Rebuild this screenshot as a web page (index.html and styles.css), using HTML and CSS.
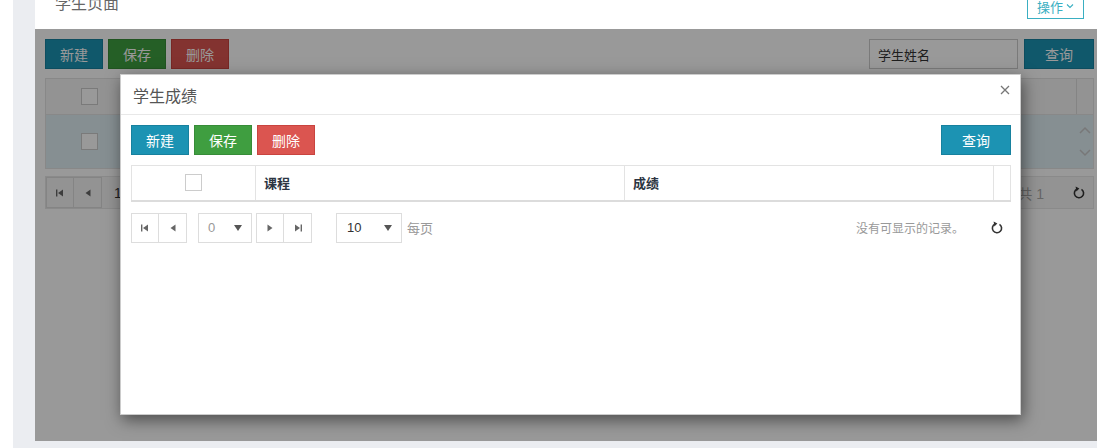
FILE: index.html
```html
<!DOCTYPE html>
<html lang="zh-CN">
<head>
    <meta charset="UTF-8">
    <meta name="viewport" content="width=device-width, initial-scale=1.0">
    <title>学生页面</title>
    <link rel="stylesheet" href="styles.css">
</head>
<body>
    <div class="layout">
        <aside class="sidebar"></aside>

        <main class="content">
            <section class="panel">
                <header class="panel-head">
                    <h2>学生页面</h2>
                    <button class="btn-outline">操作
                        <svg width="8" height="6" viewBox="0 0 8 6"><path d="M1 1.5 L4 4.5 L7 1.5" fill="none" stroke="#3aafc2" stroke-width="1.1"/></svg>
                    </button>
                </header>

                <div class="panel-body">
                    <div class="toolbar">
                        <button class="btn btn-info">新建</button>
                        <button class="btn btn-success">保存</button>
                        <button class="btn btn-danger">删除</button>
                        <input class="search" type="text" value="学生姓名">
                        <button class="btn btn-info btn-query">查询</button>
                    </div>

                    <!-- 学生列表 -->
                    <div class="grid">
                        <div class="grid-head">
                            <div class="cell-check"><span class="checkbox"></span></div>
                            <div class="cell-fill"></div>
                            <div class="cell-gutter"></div>
                        </div>
                        <div class="grid-row">
                            <div class="cell-check"><span class="checkbox"></span></div>
                            <div class="cell-fill"></div>
                            <div class="cell-arrows">
                                <svg width="12" height="8" viewBox="0 0 12 8"><path d="M1 7 L6 2 L11 7" fill="none" stroke="#c8c8c8" stroke-width="1.5"/></svg>
                                <svg width="12" height="8" viewBox="0 0 12 8"><path d="M1 1 L6 6 L11 1" fill="none" stroke="#c8c8c8" stroke-width="1.5"/></svg>
                            </div>
                        </div>
                    </div>

                    <div class="grid-pager">
                        <div class="pager-group">
                            <span class="pg-btn"><svg width="8" height="8" viewBox="0 0 8 8"><rect x="0" y="0.5" width="1.4" height="7" fill="#666"/><path d="M7 0.5 L2 4 L7 7.5Z" fill="#666"/></svg></span>
                            <span class="pg-btn"><svg width="6" height="8" viewBox="0 0 6 8"><path d="M5.5 0.5 L0.5 4 L5.5 7.5Z" fill="#666"/></svg></span>
                        </div>
                        <span class="pg-num">1</span>
                        <span class="pg-total">共 1</span>
                        <svg class="pg-refresh" width="12" height="13" viewBox="0 0 12 13"><path d="M4 3 A4.6 4.6 0 1 0 8.5 3.3" fill="none" stroke="#333" stroke-width="1.6"/><path d="M2.6 0.6 L6.4 2.6 L3.4 5.4Z" fill="#333"/></svg>
                    </div>

                    <div class="backdrop"></div>

                    <!-- 学生成绩弹窗 -->
                    <div class="modal">
                        <div class="modal-head">
                            <h3>学生成绩</h3>
                            <svg class="close" width="10" height="10" viewBox="0 0 10 10"><path d="M1 1 L9 9 M9 1 L1 9" stroke="#777" stroke-width="1.3"/></svg>
                        </div>
                        <div class="modal-body">
                            <div class="toolbar">
                                <button class="btn btn-info">新建</button>
                                <button class="btn btn-success">保存</button>
                                <button class="btn btn-danger">删除</button>
                                <button class="btn btn-info btn-query">查询</button>
                            </div>

                            <table class="score-table">
                                <thead>
                                    <tr>
                                        <th class="col-check"><span class="checkbox"></span></th>
                                        <th class="col-course">课程</th>
                                        <th class="col-score">成绩</th>
                                        <th class="col-gutter"></th>
                                    </tr>
                                </thead>
                            </table>

                            <div class="pager">
                                <div class="pager-group">
                                    <span class="pg-btn"><svg width="8" height="8" viewBox="0 0 8 8"><rect x="0" y="0.5" width="1.4" height="7" fill="#666"/><path d="M7 0.5 L2 4 L7 7.5Z" fill="#666"/></svg></span>
                                    <span class="pg-btn"><svg width="6" height="8" viewBox="0 0 6 8"><path d="M5.5 0.5 L0.5 4 L5.5 7.5Z" fill="#666"/></svg></span>
                                </div>
                                <span class="pg-select pg-page"><span class="muted">0</span><svg width="8" height="6" viewBox="0 0 8 6"><path d="M0 0 L8 0 L4 6Z" fill="#555"/></svg></span>
                                <div class="pager-group">
                                    <span class="pg-btn"><svg width="6" height="8" viewBox="0 0 6 8"><path d="M0.5 0.5 L5.5 4 L0.5 7.5Z" fill="#666"/></svg></span>
                                    <span class="pg-btn"><svg width="8" height="8" viewBox="0 0 8 8"><path d="M1 0.5 L6 4 L1 7.5Z" fill="#666"/><rect x="6.6" y="0.5" width="1.4" height="7" fill="#666"/></svg></span>
                                </div>
                                <span class="pg-select pg-size"><span>10</span><svg width="8" height="6" viewBox="0 0 8 6"><path d="M0 0 L8 0 L4 6Z" fill="#555"/></svg></span>
                                <span class="pg-label">每页</span>
                                <span class="pg-info">没有可显示的记录。</span>
                                <svg class="pg-refresh" width="12" height="13" viewBox="0 0 12 13"><path d="M4 3 A4.6 4.6 0 1 0 8.5 3.3" fill="none" stroke="#333" stroke-width="1.6"/><path d="M2.6 0.6 L6.4 2.6 L3.4 5.4Z" fill="#333"/></svg>
                            </div>
                        </div>
                    </div>
                </div>
            </section>
        </main>
    </div>
</body>
</html>
```

FILE: styles.css
```css
* {
    box-sizing: border-box;
}
body {
    margin: 0;
    font-family: "Liberation Sans", "Noto Sans CJK SC", sans-serif;
    color: #333;
    background-color: #ebedf1;
    height: 448px;
    overflow: hidden;
}
.layout {
    display: flex;
    height: 448px;
}
.sidebar {
    width: 13px;
    background-color: #fff;
}
.content {
    flex: 1;
    padding: 0 0 7px 22px;
    display: flex;
}
.panel {
    flex: 1;
    display: flex;
    flex-direction: column;
    background-color: #fff;
}
.panel-head {
    height: 29px;
    display: flex;
    justify-content: space-between;
    align-items: flex-start;
    padding: 0 13px 0 20px;
    overflow: hidden;
}
.panel-head h2 {
    margin: -6px 0 0;
    font-size: 16px;
    line-height: 20px;
    font-weight: normal;
    color: #666;
}
.btn-outline {
    margin-top: -7px;
    height: 26px;
    width: 57px;
    padding: 0;
    border: 1px solid #3aafc2;
    background: #fff;
    color: #3aafc2;
    font-family: inherit;
    font-size: 13px;
    display: flex;
    align-items: center;
    justify-content: center;
    gap: 3px;
}
.panel-body {
    flex: 1;
    position: relative;
    padding: 10px 3px 0 10px;
}

/* botones */
.toolbar {
    display: flex;
    gap: 5px;
    height: 30px;
}
.btn {
    width: 58px;
    height: 30px;
    padding: 0;
    border: 1px solid;
    color: #fff;
    font-family: inherit;
    font-size: 14px;
}
.btn-info {
    background-color: #1c93b3;
    border-color: #17819e;
}
.btn-success {
    background-color: #3f9e40;
    border-color: #378c38;
}
.btn-danger {
    background-color: #db5550;
    border-color: #c9443f;
}
.btn-query {
    width: 70px;
    margin-left: auto;
}
.search {
    margin-left: auto;
    width: 149px;
    height: 30px;
    border: 1px solid #ccc;
    padding: 0 8px;
    font-family: inherit;
    font-size: 13px;
    color: #333;
}
.search + .btn-query {
    margin-left: 1px;
}

/* tabla de fondo */
.grid {
    margin-top: 9px;
    border: 1px solid #e3e3e3;
}
.grid-head, .grid-row {
    display: flex;
}
.grid-head {
    height: 36px;
    background-color: #f6f6f6;
    border-bottom: 1px solid #e3e3e3;
}
.grid-row {
    height: 53px;
    background-color: #e0eef4;
}
.cell-check {
    width: 86px;
    display: flex;
    align-items: center;
    justify-content: center;
}
.cell-fill {
    flex: 1;
}
.cell-gutter {
    width: 17px;
    border-left: 1px solid #ddd;
}
.cell-arrows {
    width: 17px;
    display: flex;
    flex-direction: column;
    justify-content: center;
    align-items: center;
    gap: 15px;
}
.checkbox {
    display: inline-block;
    width: 17px;
    height: 17px;
    border: 1px solid #ccc;
    background: #fff;
}
.grid-pager {
    margin-top: 7px;
    height: 33px;
    display: flex;
    align-items: center;
    background-color: #f6f6f6;
    border: 1px solid #e6e6e6;
    font-size: 14px;
}
.grid-pager .pg-btn {
    height: 31px;
}
.pg-num {
    margin-left: 12px;
}
.pg-total {
    margin-left: auto;
    color: #aaa;
}
.grid-pager .pg-refresh {
    margin: 0 8px 0 29px;
}

.backdrop {
    position: absolute;
    inset: 0;
    background-color: rgba(0, 0, 0, 0.4);
}

/* ventana modal */
.modal {
    position: absolute;
    left: 85px;
    top: 45px;
    width: 901px;
    height: 341px;
    background-color: #fff;
    border: 1px solid rgba(0, 0, 0, 0.2);
    box-shadow: 2px 5px 15px rgba(0, 0, 0, 0.5);
}
.modal-head {
    height: 40px;
    display: flex;
    align-items: center;
    justify-content: space-between;
    padding: 0 10px 0 12px;
    border-bottom: 1px solid #e8e8e8;
}
.modal-head h3 {
    margin: 0;
    font-size: 16px;
    font-weight: normal;
    color: #555;
}
.close {
    margin-top: -10px;
}
.modal-body {
    padding: 10px 9px 10px 10px;
}
.score-table {
    margin-top: 10px;
    width: 100%;
    border-collapse: collapse;
    border: 1px solid #e3e3e3;
}
.score-table th {
    height: 35px;
    padding: 0 8px;
    text-align: left;
    font-size: 13px;
    color: #2c3542;
    border-left: 1px solid #e3e3e3;
    border-bottom: 2px solid #dcdcdc;
}
.score-table .col-check {
    width: 124px;
    text-align: center;
    border-left: none;
}
.score-table .col-check .checkbox {
    vertical-align: middle;
}
.score-table .col-course {
    width: 369px;
}
.score-table .col-gutter {
    width: 17px;
    padding: 0;
}

/* paginador */
.pager {
    margin-top: 11px;
    display: flex;
    align-items: center;
    height: 30px;
    font-size: 13px;
}
.pager-group {
    display: flex;
}
.pg-btn {
    width: 28px;
    height: 30px;
    display: flex;
    align-items: center;
    justify-content: center;
    border: 1px solid #ddd;
}
.pg-btn + .pg-btn {
    border-left: none;
}
.pg-select {
    height: 30px;
    display: flex;
    align-items: center;
    justify-content: space-between;
    border: 1px solid #ddd;
    padding: 0 9px 0 9px;
}
.pg-page {
    width: 54px;
    margin: 0 4px 0 11px;
}
.pg-size {
    width: 66px;
    margin-left: 24px;
    padding-left: 10px;
}
.muted {
    color: #999;
}
.pg-label {
    margin-left: 5px;
    color: #999;
}
.pg-info {
    margin-left: auto;
    font-size: 12px;
    color: #999;
}
.pager .pg-refresh {
    margin: 0 8px 0 27px;
}
```
